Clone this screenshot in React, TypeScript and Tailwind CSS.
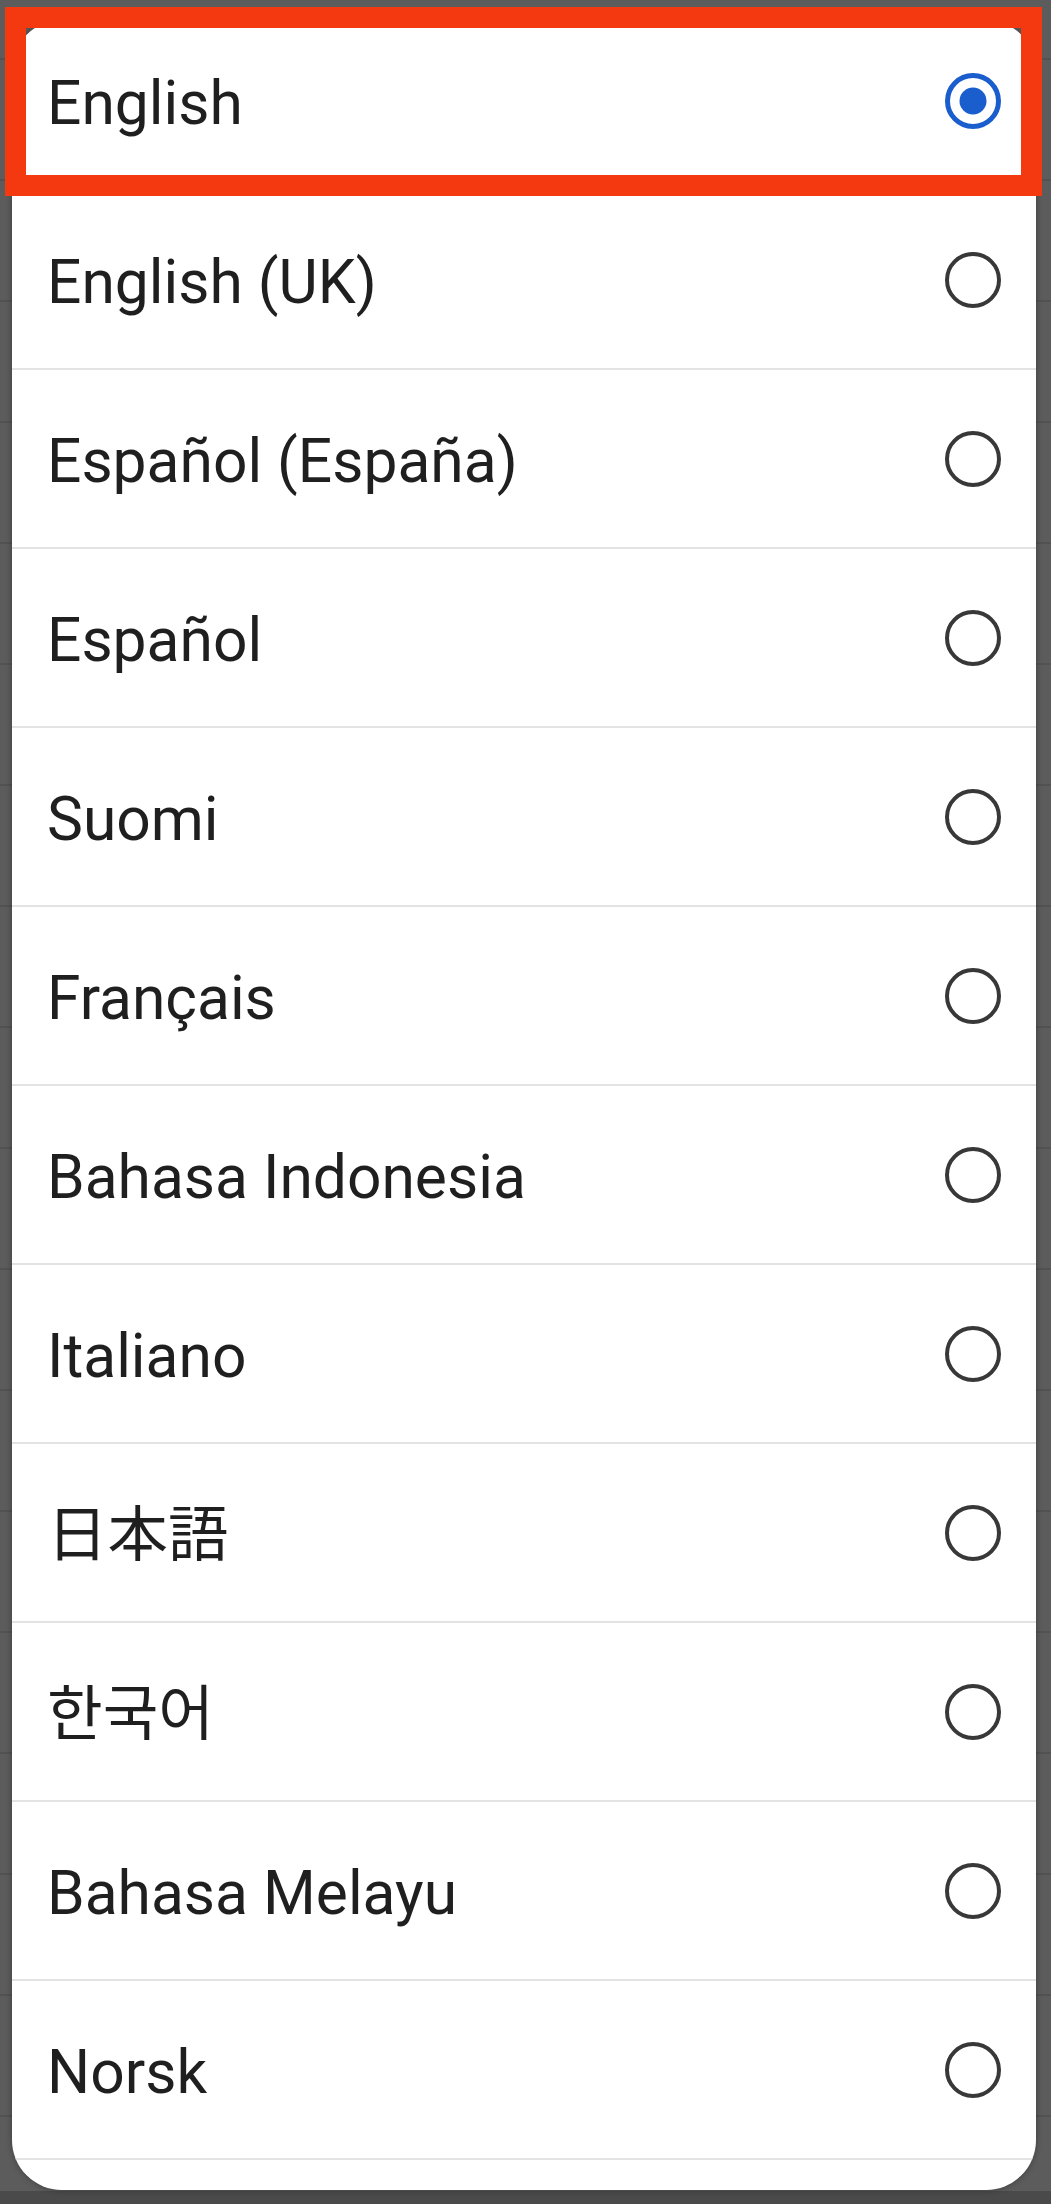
import React from "react";

type Lang = { label: string; font: string };

const langs: Lang[] = [
  { label: "English", font: "font-['Roboto','Liberation_Sans',sans-serif]" },
  { label: "English (UK)", font: "font-['Roboto','Liberation_Sans',sans-serif]" },
  { label: "Español (España)", font: "font-['Roboto','Liberation_Sans',sans-serif]" },
  { label: "Español", font: "font-['Roboto','Liberation_Sans',sans-serif]" },
  { label: "Suomi", font: "font-['Roboto','Liberation_Sans',sans-serif]" },
  { label: "Français", font: "font-['Roboto','Liberation_Sans',sans-serif]" },
  { label: "Bahasa Indonesia", font: "font-['Roboto','Liberation_Sans',sans-serif]" },
  { label: "Italiano", font: "font-['Roboto','Liberation_Sans',sans-serif]" },
  { label: "日本語", font: "font-['Roboto','Noto_Sans_CJK_JP',sans-serif]" },
  { label: "한국어", font: "font-['Roboto','Noto_Sans_CJK_KR',sans-serif]" },
  { label: "Bahasa Melayu", font: "font-['Roboto','Liberation_Sans',sans-serif]" },
  { label: "Norsk", font: "font-['Roboto','Liberation_Sans',sans-serif]" },
];

function Radio({ checked }: { checked: boolean }) {
  if (checked) {
    return (
      <svg width="60" height="60" viewBox="0 0 60 60" className="shrink-0">
        <circle cx="30" cy="30" r="25.5" fill="none" stroke="#1a5dcc" strokeWidth="5" />
        <circle cx="30" cy="30" r="13.5" fill="#1a5dcc" />
      </svg>
    );
  }
  return (
    <svg width="60" height="60" viewBox="0 0 60 60" className="shrink-0">
      <circle cx="30" cy="30" r="26" fill="none" stroke="#383838" strokeWidth="4" />
    </svg>
  );
}

export default function App() {
  const bgRows = Array.from({ length: 18 }, (_, i) => i);
  return (
    <div className="relative w-[1051px] h-[2204px] overflow-hidden bg-[#5c5c5c]">
      {/* underlying dimmed page */}
      <div className="flex flex-col h-full">
        <div className="flex-1 overflow-hidden flex flex-col">
          <div className="h-[60px] shrink-0 border-b-2 border-[#525252]" />
          {bgRows.map((i) => (
            <div key={i} className="h-[121px] shrink-0 border-b-2 border-[#525252]" />
          ))}
        </div>
        <div className="h-[13px] shrink-0 bg-[#4a4a4a]" />
      </div>

      {/* language dialog */}
      <div className="absolute left-[12px] top-[20px] w-[1024px] h-[2170px] rounded-[50px] bg-white overflow-hidden shadow-[0_0_6px_rgba(0,0,0,0.35)]">
        <div className="-mt-[8px] flex flex-col">
          {langs.map((l, i) => (
            <div
              key={l.label}
              className="h-[179px] shrink-0 flex items-center justify-between pl-[35px] pr-[33px] border-b-2 border-[#e3e3e3]"
            >
              <span className={`${l.font} text-[60.5px] leading-none text-[#1f1f1f] pt-[8px]`}>
                {l.label}
              </span>
              <Radio checked={i === 0} />
            </div>
          ))}
        </div>
      </div>

      {/* highlight annotation */}
      <div className="absolute left-[5px] top-[7px] w-[1037px] h-[189px] border-[21px] border-[#f4380f]" />
    </div>
  );
}
